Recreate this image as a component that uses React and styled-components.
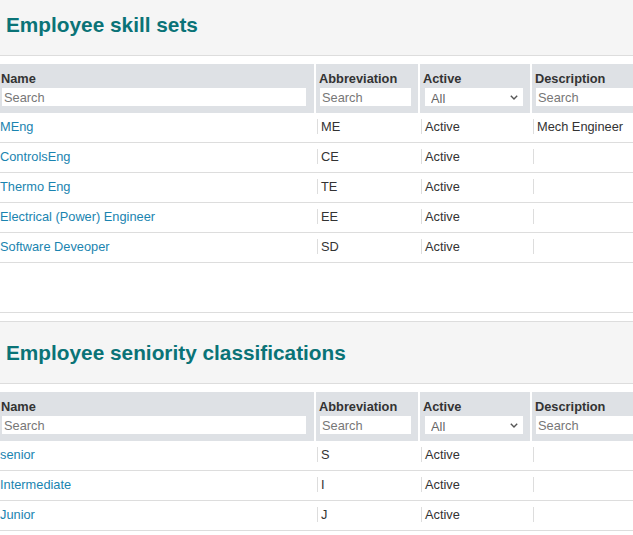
import React from 'react'
import styled, { createGlobalStyle } from 'styled-components'

const Global = createGlobalStyle`
  html, body {
    margin: 0;
    padding: 0;
    background: #fff;
    overflow: hidden;
  }
  body {
    font-family: "Liberation Sans", Arial, sans-serif;
    font-size: 12.8px;
    color: #333;
  }
`

const Page = styled.div`
  margin-top: -7px;
  overflow: hidden;
`

const Section = styled.section`
  border-bottom: 1px solid #ddd;
  padding-bottom: 49px;

  & + & {
    margin-top: 8px;
  }
`

const Panel = styled.div`
  height: 61px;
  display: flex;
  align-items: center;
  padding-left: 6px;
  background: #f5f5f5;
  border-top: 1px solid #ddd;
  border-bottom: 1px solid #ddd;
`

const Title = styled.h2`
  margin: 0;
  font-size: 20.8px;
  font-weight: bold;
  color: #0a7377;
`

const Table = styled.table`
  margin-top: 8px;
  width: 661px;
  table-layout: fixed;
  border-collapse: collapse;
`

const Head = styled.th`
  background: #dee1e5;
  text-align: left;
  vertical-align: top;
  padding: 7px 7px 7px 3px;
  border-left: 2px solid #fff;

  &:first-child {
    border-left: none;
    padding-left: 1px;
    padding-right: 8px;
  }
`

const Label = styled.div`
  font-weight: bold;
  line-height: 15px;
  color: #333;
`

const Search = styled.input`
  display: block;
  box-sizing: border-box;
  margin: 2px 0 0 1px;
  width: calc(100% - 1px);
  height: 18px;
  padding: 0 2px;
  border: none;
  outline: none;
  background: #fff;
  font-family: inherit;
  font-size: 12.8px;
  color: #333;

  &::placeholder {
    color: #777;
  }
`

const SelectWrap = styled.div`
  position: relative;
  margin: 2px 0 0 2px;
  height: 18px;
`

const Select = styled.select`
  appearance: none;
  box-sizing: border-box;
  width: 100%;
  height: 18px;
  padding: 2px 0 0 6px;
  border: none;
  outline: none;
  background: #fff;
  font-family: inherit;
  font-size: 12.8px;
  color: #666;
`

const Chevron = styled.svg`
  position: absolute;
  right: 5px;
  top: 7px;
  pointer-events: none;
`

const Cell = styled.td`
  padding: 6px 8px 8px 2px;
  border-bottom: 1px solid #ddd;
  line-height: 15px;
  white-space: nowrap;
  overflow: hidden;

  &:first-child {
    padding-left: 0;
  }
`

const Inner = styled.span`
  display: block;
  height: 15px;
  padding-left: ${p => (p.$first ? '0' : '3px')};
  border-left: ${p => (p.$first ? 'none' : '1px solid #ddd')};
`

const NameLink = styled.a`
  color: #1a84b0;
  text-decoration: none;
  cursor: pointer;
`

const columns = [
  { key: 'name', label: 'Name', width: 315 },
  { key: 'abbr', label: 'Abbreviation', width: 104 },
  { key: 'active', label: 'Active', width: 112, select: true },
  { key: 'desc', label: 'Description', width: 130 },
]

function DataTable({ rows }) {
  return (
    <Table>
      <colgroup>
        {columns.map(c => (
          <col key={c.key} style={{ width: c.width }} />
        ))}
      </colgroup>
      <thead>
        <tr>
          {columns.map(c => (
            <Head key={c.key}>
              <Label>{c.label}</Label>
              {c.select ? (
                <SelectWrap>
                  <Select defaultValue="All">
                    <option>All</option>
                    <option>Active</option>
                    <option>Inactive</option>
                  </Select>
                  <Chevron width="8" height="5" viewBox="0 0 8 5">
                    <polyline points="0.8,0.8 4,4 7.2,0.8" fill="none" stroke="#555" strokeWidth="1.4" />
                  </Chevron>
                </SelectWrap>
              ) : (
                <Search placeholder="Search" />
              )}
            </Head>
          ))}
        </tr>
      </thead>
      <tbody>
        {rows.map((r, i) => (
          <tr key={i}>
            <Cell>
              <Inner $first>
                <NameLink>{r.name}</NameLink>
              </Inner>
            </Cell>
            <Cell><Inner>{r.abbr}</Inner></Cell>
            <Cell><Inner>Active</Inner></Cell>
            <Cell><Inner>{r.desc}</Inner></Cell>
          </tr>
        ))}
      </tbody>
    </Table>
  )
}

const skills = [
  { name: 'MEng', abbr: 'ME', desc: 'Mech Engineer' },
  { name: 'ControlsEng', abbr: 'CE', desc: '' },
  { name: 'Thermo Eng', abbr: 'TE', desc: '' },
  { name: 'Electrical (Power) Engineer', abbr: 'EE', desc: '' },
  { name: 'Software Deveoper', abbr: 'SD', desc: '' },
]

const seniority = [
  { name: 'senior', abbr: 'S', desc: '' },
  { name: 'Intermediate', abbr: 'I', desc: '' },
  { name: 'Junior', abbr: 'J', desc: '' },
]

export default function App() {
  return (
    <>
      <Global />
      <Page>
        <Section>
          <Panel>
            <Title>Employee skill sets</Title>
          </Panel>
          <DataTable rows={skills} />
        </Section>
        <Section>
          <Panel>
            <Title>Employee seniority classifications</Title>
          </Panel>
          <DataTable rows={seniority} />
        </Section>
      </Page>
    </>
  )
}
